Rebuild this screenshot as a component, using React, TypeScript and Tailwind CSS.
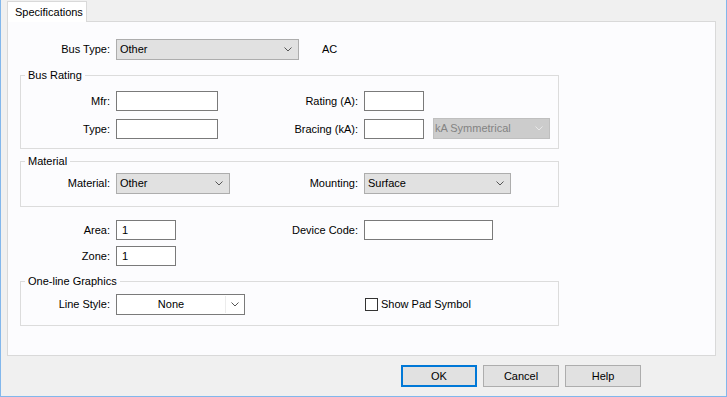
import React from 'react'

const Chevron = ({ light = false }: { light?: boolean }) => (
  <svg width="8" height="5" viewBox="0 0 8 5" className="shrink-0">
    <polyline
      points="0.5,0.5 4,4 7.5,0.5"
      fill="none"
      stroke={light ? '#e8e8e8' : '#555555'}
      strokeWidth="1"
    />
  </svg>
)

const Select = ({ value, w, disabled = false }: { value: string; w: string; disabled?: boolean }) => (
  <div
    className={`flex h-[21px] items-center justify-between border pr-[6px] ${w} ${
      disabled
        ? 'border-[#bfbfbf] bg-[#cccccc] pl-[1px] text-[#838383]'
        : 'border-[#adadad] bg-[#e1e1e1] pl-[3px] text-[#000000]'
    }`}
  >
    <span>{value}</span>
    <Chevron light={disabled} />
  </div>
)

const Input = ({ w, value = '' }: { w: string; value?: string }) => (
  <div className={`flex h-[20px] items-center border border-[#7a7a7a] bg-white pl-[5px] ${w}`}>
    {value}
  </div>
)

const Label = ({ text, w }: { text: string; w: string }) => (
  <div className={`mr-[6px] shrink-0 text-right ${w}`}>{text}</div>
)

const Group = ({ title, children, className }: { title: string; children: React.ReactNode; className: string }) => (
  <fieldset className={`w-[539px] border border-[#dcdcdc] ${className}`}>
    <legend className="ml-[4px] px-[3px] leading-[14px]">{title}</legend>
    {children}
  </fieldset>
)

export default function App() {
  return (
    <div className="flex h-[397px] w-[727px] flex-col border-r border-b border-l border-[#82b7ec] bg-[#f0f0f0] font-['Liberation_Sans',Arial,sans-serif] text-[11px] text-black">
      {/* Tab */}
      <div className="flex pt-[1px] pl-[6px]">
        <div className="relative z-10 -mb-[1px] flex h-[21px] w-[80px] items-center border-t border-r border-l border-[#d9d9d9] bg-white pl-[7px]">
          Specifications
        </div>
      </div>

      {/* Tab panel */}
      <div className="ml-[6px] flex h-[335px] w-[709px] flex-col border border-[#d9d9d9] bg-[#fcfcfe] pl-[12px]">
        <div className="mt-[17px] flex items-center">
          <Label text="Bus Type:" w="w-[90px]" />
          <Select value="Other" w="w-[183px]" />
          <div className="ml-[23px]">AC</div>
        </div>

        <Group title="Bus Rating" className="mt-[8px] pt-[9px] pb-[9px]">
          <div className="flex flex-col gap-[8px]">
            <div className="flex items-center">
              <div className="flex w-[229px] items-center">
                <Label text="Mfr:" w="w-[89px]" />
                <Input w="w-[102px]" />
              </div>
              <Label text="Rating (A):" w="w-[108px]" />
              <Input w="w-[60px]" />
            </div>
            <div className="flex items-center">
              <div className="flex w-[229px] items-center">
                <Label text="Type:" w="w-[89px]" />
                <Input w="w-[102px]" />
              </div>
              <Label text="Bracing (kA):" w="w-[108px]" />
              <Input w="w-[60px]" />
              <div className="ml-[9px] -mt-[2px]">
                <Select value="kA Symmetrical" w="w-[117px]" disabled />
              </div>
            </div>
          </div>
        </Group>

        <Group title="Material" className="mt-[5px] pt-[5px] pb-[12px]">
          <div className="flex items-center">
            <div className="flex w-[229px] items-center">
              <Label text="Material:" w="w-[89px]" />
              <Select value="Other" w="w-[114px]" />
            </div>
            <Label text="Mounting:" w="w-[108px]" />
            <Select value="Surface" w="w-[147px]" />
          </div>
        </Group>

        <div className="mt-[13px] flex items-center">
          <div className="flex w-[230px] items-center">
            <Label text="Area:" w="w-[90px]" />
            <Input w="w-[60px]" value="1" />
          </div>
          <Label text="Device Code:" w="w-[108px]" />
          <Input w="w-[129px]" />
        </div>
        <div className="mt-[6px] flex items-center">
          <Label text="Zone:" w="w-[90px]" />
          <Input w="w-[60px]" value="1" />
        </div>

        <Group title="One-line Graphics" className="mt-[8px] pt-[6px] pb-[10px]">
          <div className="flex items-center">
            <div className="flex w-[229px] items-center">
              <Label text="Line Style:" w="w-[89px]" />
              <div className="flex h-[21px] w-[129px] items-stretch border border-[#7a7a7a] bg-white">
                <div className="flex flex-1 items-center justify-center">None</div>
                <div className="my-[1px] w-[1px] bg-[#ececec]" />
                <div className="flex w-[18px] items-center justify-center">
                  <Chevron />
                </div>
              </div>
            </div>
            <div className="flex items-center gap-[3px] pl-[115px]">
              <div className="h-[13px] w-[13px] border border-[#333333] bg-white" />
              <span>Show Pad Symbol</span>
            </div>
          </div>
        </Group>
      </div>

      {/* Dialog buttons */}
      <div className="mt-[9px] flex justify-end gap-[6px] pr-[85px]">
        <button className="flex h-[22px] w-[76px] items-center justify-center border-2 border-[#0078d7] bg-[#e1e1e1]">
          OK
        </button>
        <button className="flex h-[22px] w-[76px] items-center justify-center border border-[#adadad] bg-[#e1e1e1]">
          Cancel
        </button>
        <button className="flex h-[22px] w-[76px] items-center justify-center border border-[#adadad] bg-[#e1e1e1]">
          Help
        </button>
      </div>
    </div>
  )
}
